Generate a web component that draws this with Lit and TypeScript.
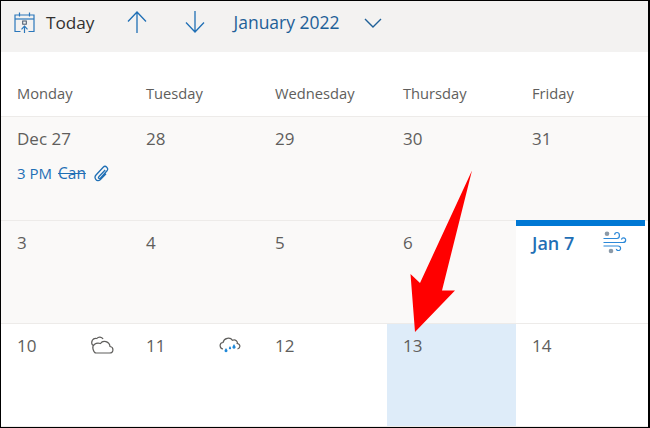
import { LitElement, html, css } from "lit";
import { customElement } from "lit/decorators.js";

const arrowUp = html`<svg width="20" height="22" viewBox="0 0 20 22"><path d="M1 10.5 L10 1 L19 10.5 M10 1 V22" fill="none" stroke="#1f6fb5" stroke-width="1.3"/></svg>`;
const arrowDown = html`<svg width="20" height="22" viewBox="0 0 20 22"><path d="M1 11.5 L10 21 L19 11.5 M10 21 V0" fill="none" stroke="#1f6fb5" stroke-width="1.3"/></svg>`;
const chevron = html`<svg width="18" height="10" viewBox="0 0 18 10"><path d="M1 1 L9 9 L17 1" fill="none" stroke="#1f6098" stroke-width="1.4"/></svg>`;
const todayIcon = html`<svg width="21" height="21" viewBox="0 0 21 21" fill="none" stroke="#2b77bb" stroke-width="1.2"><path d="M6.5 19.5 H1 V3 H20 V19.5 H14.5"/><path d="M1 7 H20" /><path d="M5.5 .5 V4.5 M15.5 .5 V4.5"/><rect x="8.7" y="9" width="3.6" height="3.2" stroke="#44546a" stroke-width="1"/><path d="M10.5 21 V14.5 M7.5 17.3 L10.5 14.2 L13.5 17.3"/></svg>`;
const clip = html`<svg class="clip" width="15" height="17" viewBox="0 0 15 17" fill="none" stroke="#1f6fb5" stroke-width="1.3"><path d="M11.2 5 L4.8 11.8 C3.8 13 5.4 14.3 6.4 13.2 L13 5.8 C15 3.4 11.6 -.2 9.2 2.2 L2 10 C-.6 13 3 17.6 6.2 14.8 L12 8.8"/></svg>`;
const cloud = html`<svg width="24" height="18" viewBox="0 0 24 18" fill="none" stroke="#5f5e5c" stroke-width="1.2"><path d="M2.8 9.5 C.2 6 2.8 1.5 6.8 2.5 C8.3 .5 11.8 .5 13.1 3"/><path d="M6 17 H19.5 C24 17 24 11 20 10.5 C19.5 5.5 13 3.5 10.5 7.5 C6 6 1.8 9 3 13 C3.7 15.5 4.5 17 6 17 Z"/></svg>`;
const rain = html`<svg width="22" height="17" viewBox="0 0 22 17" fill="none"><path d="M4 12 C.5 11.5 -.2 6 4 5.5 C5 1 11 -.3 13.5 3.3 C16.5 2 19 4.5 18.2 6.5 C21.5 7 22 11 18.5 12" stroke="#5f5e5c" stroke-width="1.2"/><g fill="#1e88d8"><path d="M7 11 l1.3 2.1 a1.5 1.5 0 1 1 -2.6 0 Z"/><path d="M15 7 l1.4 2.4 a1.6 1.6 0 1 1 -2.8 0 Z"/><path d="M11 9 l1 1.7 a1.1 1.1 0 1 1 -2 0 Z"/></g></svg>`;
const wind = html`<svg width="24" height="23" viewBox="0 0 24 23" fill="none"><path d="M.5 7.5 H14 C17.2 7.5 17.2 1.5 14 1.5 C12.5 1.5 11.5 2.7 11.8 3.9" stroke="#2b88d8" stroke-width="1.2"/><path d="M.5 11.5 H20 C23.5 11.5 23.5 6.8 20.5 6.8 C19.2 6.8 18.5 7.8 18.7 8.6" stroke="#2b88d8" stroke-width="1.2"/><path d="M.5 15 H15 C18.4 15 18.4 19.5 15.3 19.5 C14 19.5 13.3 18.7 13.4 17.9" stroke="#2b88d8" stroke-width="1.2"/><circle cx="4" cy="2.8" r="2.3" fill="#8b9aa8"/><circle cx="8" cy="20" r="2.3" fill="#8b9aa8"/></svg>`;

interface Cell { label: string; tone?: "past" | "current" | "selected"; icon?: unknown; iconClass?: string; }

const rows: Cell[][] = [
  [{ label: "3", tone: "past" }, { label: "4", tone: "past" }, { label: "5", tone: "past" }, { label: "6", tone: "past" }, { label: "Jan 7", tone: "current", icon: wind }],
  [{ label: "10", icon: cloud, iconClass: "c" }, { label: "11", icon: rain, iconClass: "r" }, { label: "12" }, { label: "13", tone: "selected" }, { label: "14" }],
];

@customElement("app-root")
export class AppRoot extends LitElement {
  static styles = css`
    :host {
      display: block;
      width: 650px;
      height: 428px;
      box-sizing: border-box;
      overflow: hidden;
      position: relative;
      background: #000;
      padding: 1px 2px 1px 1px;
      font-family: "Open Sans", "Noto Sans", sans-serif;
      color: #605e5c;
    }
    .page { background: #fff; height: 426px; display: flex; flex-direction: column; }
    .toolbar {
      height: 51px; box-sizing: border-box; background: #f3f2f1; display: flex; align-items: center;
      padding: 0 0 9px 13px; flex: none;
    }
    .label { font-size: 17.2px; color: #323130; margin-left: 11px; }
    .up { margin-left: 33px; display: flex; }
    .down { margin-left: 38px; display: flex; }
    .month { font-size: 17.5px; color: #1f6098; margin-left: 28px; }
    .chev { margin-left: 24px; display: flex; margin-top: 1px; }
    .grid { display: grid; grid-template-columns: 129px 129px 128px 129px 1fr; flex: 1; grid-template-rows: 64px 104px 103px 1fr; }
    .head { grid-column: 1 / -1; display: grid; grid-template-columns: subgrid; align-items: end; }
    .head span { padding: 0 0 13px 16px; font-size: 14.7px; line-height: 20px; }
    .row {
      grid-column: 1 / -1; display: grid; grid-template-columns: subgrid;
      border-top: 1px solid #edebe9; box-sizing: border-box;
    }
    .row.last { border-bottom: 1px solid #edebe9; }
    .cell { padding: 8px 0 0 16px; position: relative; font-size: 17px; line-height: 28px; box-sizing: border-box; }
    .cell.past { background: #faf9f8; }
    .cell.current { border-top: 6px solid #0078d4; margin: -1px 3px 0 0; color: #1f6fb5; font-weight: 600; font-size: 18px; padding-top: 3px; }
    .cell.selected { background: #deecf9; }
    .wx { position: absolute; display: flex; }
    .wx.c { top: 12px; right: 16px; }
    .wx.r { top: 13px; right: 18px; }
    .wx.w { top: 5px; right: 18px; }
    .event { display: flex; align-items: center; font-size: 15px; line-height: 18px; color: #1f6fb5; margin-top: 11px; }
    .event s { margin-left: 6px; font-size: 15.5px; }
    .clip { margin-left: 8px; }
    .arrow { position: absolute; left: 405px; top: 169px; }
  `;

  render() {
    return html`
      <div class="page">
        <div class="toolbar">
          ${todayIcon}
          <span class="label">Today</span>
          <span class="up">${arrowUp}</span>
          <span class="down">${arrowDown}</span>
          <span class="month">January 2022</span>
          <span class="chev">${chevron}</span>
        </div>
        <div class="grid">
          <div class="head">
            ${["Monday", "Tuesday", "Wednesday", "Thursday", "Friday"].map((d) => html`<span>${d}</span>`)}
          </div>
          <div class="row first">
            <div class="cell past">Dec 27
              <div class="event">3 PM <s>Can</s>${clip}</div>
            </div>
            ${["28", "29", "30", "31"].map((d) => html`<div class="cell past">${d}</div>`)}
          </div>
          ${rows.map((r, i) => html`<div class="row ${i === 1 ? "last" : ""}">
            ${r.map((c) => html`<div class="cell ${c.tone ?? ""}">${c.label}${c.icon ? html`<span class="wx ${c.iconClass ?? "w"}">${c.icon}</span>` : ""}</div>`)}
          </div>`)}
        </div>
      </div>
      <svg class="arrow" width="70" height="165" viewBox="405 169 70 165">
        <path d="M472 170.5 L442 290.5 L455 290.5 L415 332 L410.5 274 L420 283 Z" fill="#ff0000"/>
      </svg>
    `;
  }
}
